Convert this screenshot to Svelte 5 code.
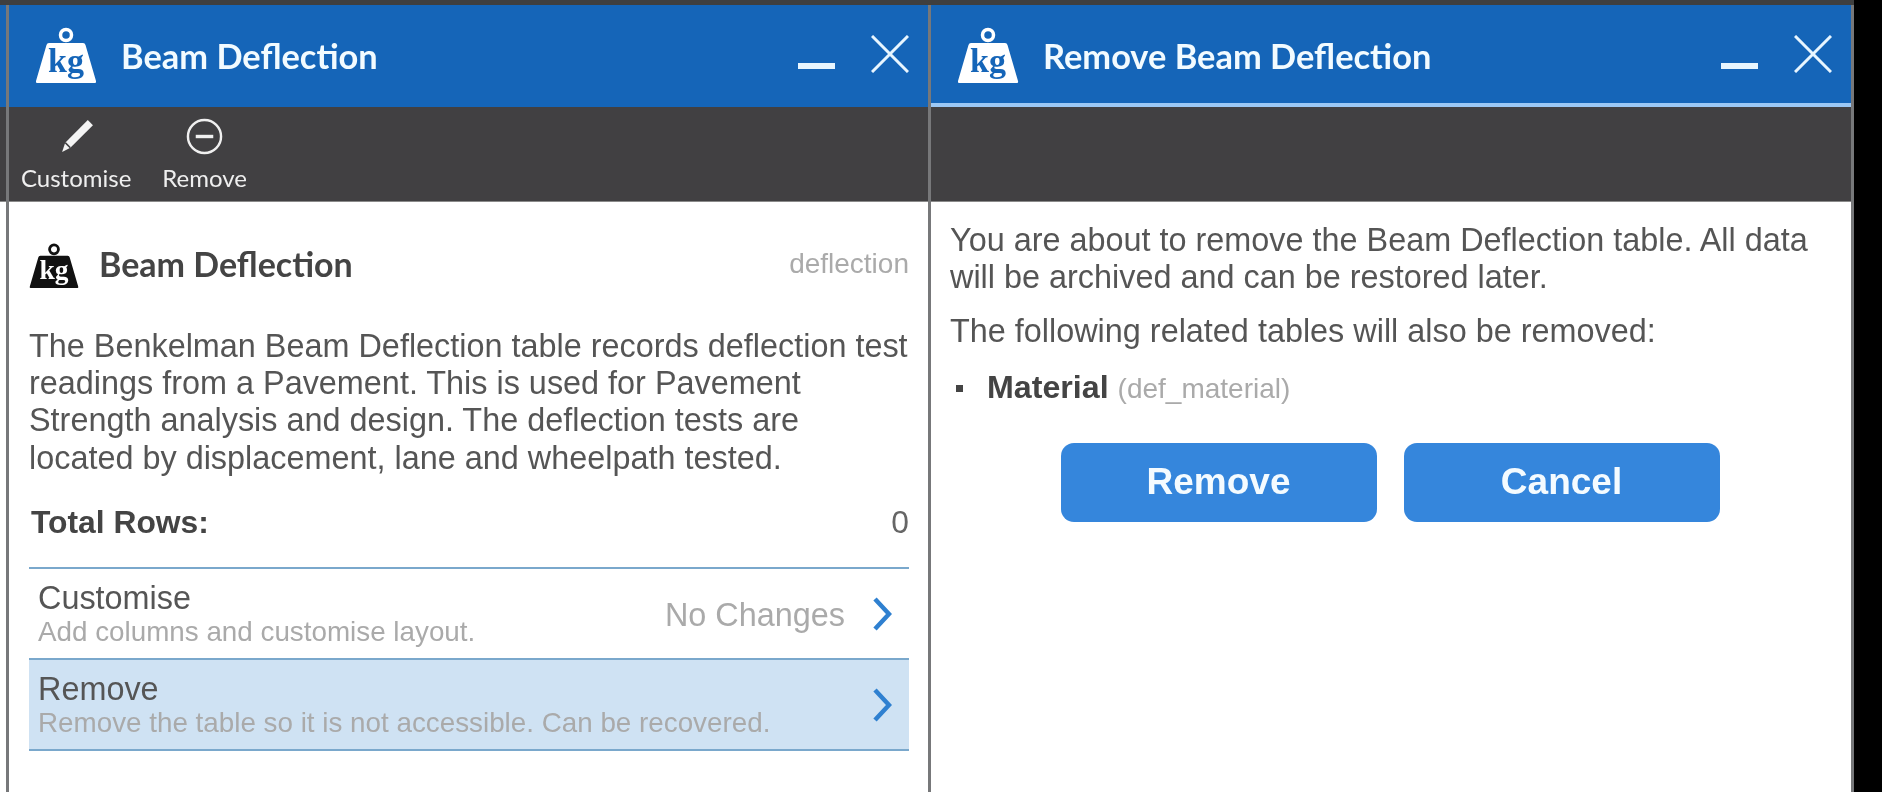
<script>
	const rows = [
		{ title: 'Customise', sub: 'Add columns and customise layout.', value: 'No Changes', active: false },
		{ title: 'Remove', sub: 'Remove the table so it is not accessible. Can be recovered.', value: '', active: true }
	];
</script>

{#snippet kg(fill, ink)}
	<svg class="kg" viewBox="0 0 62 58" aria-hidden="true">
		<circle cx="31" cy="9" r="5.5" fill="none" stroke={fill} stroke-width="3.5" />
		<path d="M14 17 H48 Q50 17 50.5 19 L61 55 Q61.500 57 60 57 H2 Q0.500 57 1 55 L11.500 19 Q12 17 14 17 Z" fill={fill} />
		<text x="31" y="46" text-anchor="middle" fill={ink}>kg</text>
	</svg>
{/snippet}

{#snippet winControls()}
	<div class="controls">
		<span class="minimise"></span>
		<svg class="close" viewBox="0 0 38 38" aria-hidden="true">
			<path d="M1 1 L37 37 M37 1 L1 37" stroke="#e8f6ff" stroke-width="3" fill="none" />
		</svg>
	</div>
{/snippet}

<div class="desktop">
	<div class="top-strip"></div>
	<div class="panes">
		<section class="pane sliver">
			<div class="head"></div>
			<div class="toolbar"></div>
			<div class="body"></div>
		</section>

		<section class="pane left">
			<header class="head">
				{@render kg('#ffffff', '#1565b8')}
				<h1>Beam Deflection</h1>
				{@render winControls()}
			</header>
			<div class="toolbar">
				<div class="tool">
					<svg viewBox="0 0 36 36" aria-hidden="true">
						<path d="M29 2 L34 7 L12 29 L4 33 L7 24 Z" fill="#f4f4f4" />
						<path d="M7 24 L12 29" stroke="#414042" stroke-width="1.500" />
					</svg>
					<span>Customise</span>
				</div>
				<div class="tool">
					<svg viewBox="0 0 38 38" aria-hidden="true">
						<circle cx="19" cy="19" r="17" fill="none" stroke="#f0f0f0" stroke-width="2.500" />
						<path d="M10 19 H28" stroke="#f0f0f0" stroke-width="3.500" />
					</svg>
					<span>Remove</span>
				</div>
			</div>
			<div class="body">
				<div class="title-row">
					{@render kg('#111111', '#ffffff')}
					<h2>Beam Deflection</h2>
					<span class="code">deflection</span>
				</div>
				<p class="desc">
					The Benkelman Beam Deflection table records deflection test readings from a Pavement. This is used for Pavement Strength analysis and design. The deflection tests are located by displacement, lane and wheelpath tested.
				</p>
				<div class="total">
					<strong>Total Rows:</strong>
					<span>0</span>
				</div>
				<ul class="rows">
					{#each rows as row}
						<li class:active={row.active}>
							<div class="row-text">
								<div class="row-title">{row.title}</div>
								<div class="row-sub">{row.sub}</div>
							</div>
							{#if row.value}<span class="row-value">{row.value}</span>{/if}
							<svg class="chevron" viewBox="0 0 20 34" aria-hidden="true">
								<path d="M3 2 L17 17 L3 32" fill="none" stroke="#2f80d0" stroke-width="4.500" />
							</svg>
						</li>
					{/each}
				</ul>
			</div>
		</section>

		<section class="pane right">
			<header class="head selected">
				{@render kg('#ffffff', '#1565b8')}
				<h1>Remove Beam Deflection</h1>
				{@render winControls()}
			</header>
			<div class="toolbar"></div>
			<div class="body">
				<p class="msg">You are about to remove the Beam Deflection table. All data will be archived and can be restored later.</p>
				<p class="msg second">The following related tables will also be removed:</p>
				<ul class="related">
					<li><strong>Material</strong> <span>(def_material)</span></li>
				</ul>
				<div class="actions">
					<button>Remove</button>
					<button>Cancel</button>
				</div>
			</div>
		</section>
	</div>
</div>

<style>
	:global(body) {
		background: #000;
	}

	.desktop {
		width: 1882px;
		height: 792px;
		display: flex;
		flex-direction: column;
		overflow: hidden;
		background: #000;
		font-family: 'Liberation Sans', Arial, sans-serif;
		font-variant-ligatures: none;
		filter: blur(0.6px);
	}

	.top-strip {
		height: 5px;
		width: 1854px;
		background: #3f3f3f;
	}

	.panes {
		flex: 1;
		display: flex;
		width: 1854px;
		border-right: 3px solid #77787a;
		box-sizing: border-box;
	}

	.pane {
		display: flex;
		flex-direction: column;
		box-sizing: border-box;
	}

	.sliver {
		width: 6px;
	}

	.left,
	.right {
		border-left: 3px solid #77787a;
	}

	.left {
		width: 922px;
	}

	.right {
		flex: 1;
	}

	.head {
		height: 102px;
		display: flex;
		align-items: center;
		background: #1565b8;
		box-sizing: border-box;
		padding: 0 19px 0 26px;
		color: #f2fbff;
	}

	.sliver .head {
		padding: 0;
	}

	.head.selected {
		box-shadow: inset 0 -4px 0 #9cc8f5;
	}

	.head h1 {
		margin: -2px 0 0 24px;
		font: 700 34.400px Lato, sans-serif;
	}

	.head .kg {
		margin-top: -3px;
	}

	.kg {
		width: 62px;
		height: 58px;
		flex: none;
	}

	.kg text {
		font: 700 34px 'Liberation Serif', serif;
	}

	.controls {
		margin-left: auto;
		display: flex;
		align-items: center;
		gap: 36px;
	}

	.minimise {
		width: 37px;
		height: 6px;
		margin-top: 20px;
		background: #e8f6ff;
	}

	.close {
		width: 38px;
		height: 38px;
		margin-top: -5px;
	}

	.toolbar {
		height: 95px;
		background: #414042;
		border-bottom: 1px solid #8a8a8a;
		box-sizing: border-box;
		display: flex;
		padding-left: 12px;
		gap: 31px;
		color: #efefef;
	}

	.tool {
		display: flex;
		flex-direction: column;
		align-items: center;
		padding-top: 11px;
		font: 24px Lato, sans-serif;
		line-height: 28px;
	}

	.tool svg {
		width: 37px;
		height: 37px;
		margin-bottom: 9px;
	}

	.body {
		flex: 1;
		background: #fff;
		color: #555;
		box-sizing: border-box;
	}

	.left .body {
		padding: 36px 19px 0 20px;
	}

	.right .body {
		padding: 20px 24px 0 19px;
	}

	.title-row {
		display: flex;
		align-items: center;
		height: 54px;
	}

	.title-row .kg {
		width: 50px;
		height: 47px;
	}

	.title-row h2 {
		margin: -3px 0 0 20px;
		font: 700 34px Lato, sans-serif;
		color: #444;
	}

	.code {
		margin-left: auto;
		margin-top: -2px;
		font-size: 28px;
		color: #aaa;
	}

	.desc {
		margin: 36px 0 0;
		font-size: 32.400px;
		line-height: 37.200px;
	}

	.total {
		display: flex;
		justify-content: space-between;
		padding: 0 0 0 2px;
		margin-top: 27px;
		height: 63px;
		font-size: 31.800px;
		line-height: 37px;
		color: #444;
		border-bottom: 2px solid #7aa8cc;
	}

	.total span {
		color: #666;
	}

	.rows {
		list-style: none;
		margin: 0;
		padding: 0;
	}

	.rows li {
		height: 91px;
		display: flex;
		align-items: center;
		box-sizing: border-box;
		padding: 0 17px 0 9px;
		border-bottom: 2px solid #7aa8cc;
	}

	.rows li.active {
		background: #cfe2f3;
	}

	.row-text {
		flex: 1;
		padding-top: 3px;
	}

	.row-title {
		font-size: 32.400px;
		line-height: 34px;
	}

	.row-sub {
		font-size: 27.800px;
		line-height: 34px;
		color: #aaa;
	}

	.row-value {
		font-size: 32.400px;
		color: #aaa;
		margin: 4px 27px 0 0;
	}

	.chevron {
		width: 20px;
		height: 34px;
		margin-top: 2px;
	}

	.msg {
		margin: 0;
		font-size: 32.400px;
		line-height: 37.200px;
	}

	.msg.second {
		margin-top: 17px;
	}

	.related {
		list-style: none;
		margin: 18px 0 0;
		padding: 0 0 0 37px;
		position: relative;
		line-height: 37px;
		font-size: 32.200px;
	}

	.related li::before {
		content: '';
		position: absolute;
		left: 6px;
		top: 16px;
		width: 7px;
		height: 7px;
		background: #444;
	}

	.related strong {
		color: #444;
	}

	.related span {
		font-size: 28px;
		color: #aaa;
	}

	.actions {
		display: flex;
		justify-content: center;
		gap: 27px;
		margin-top: 36px;
		padding-left: 3px;
	}

	.actions button {
		width: 316px;
		height: 79px;
		border: none;
		border-radius: 13px;
		background: #3586dc;
		color: #f4fbff;
		font: 700 37px 'Liberation Sans', Arial, sans-serif;
	}
</style>
